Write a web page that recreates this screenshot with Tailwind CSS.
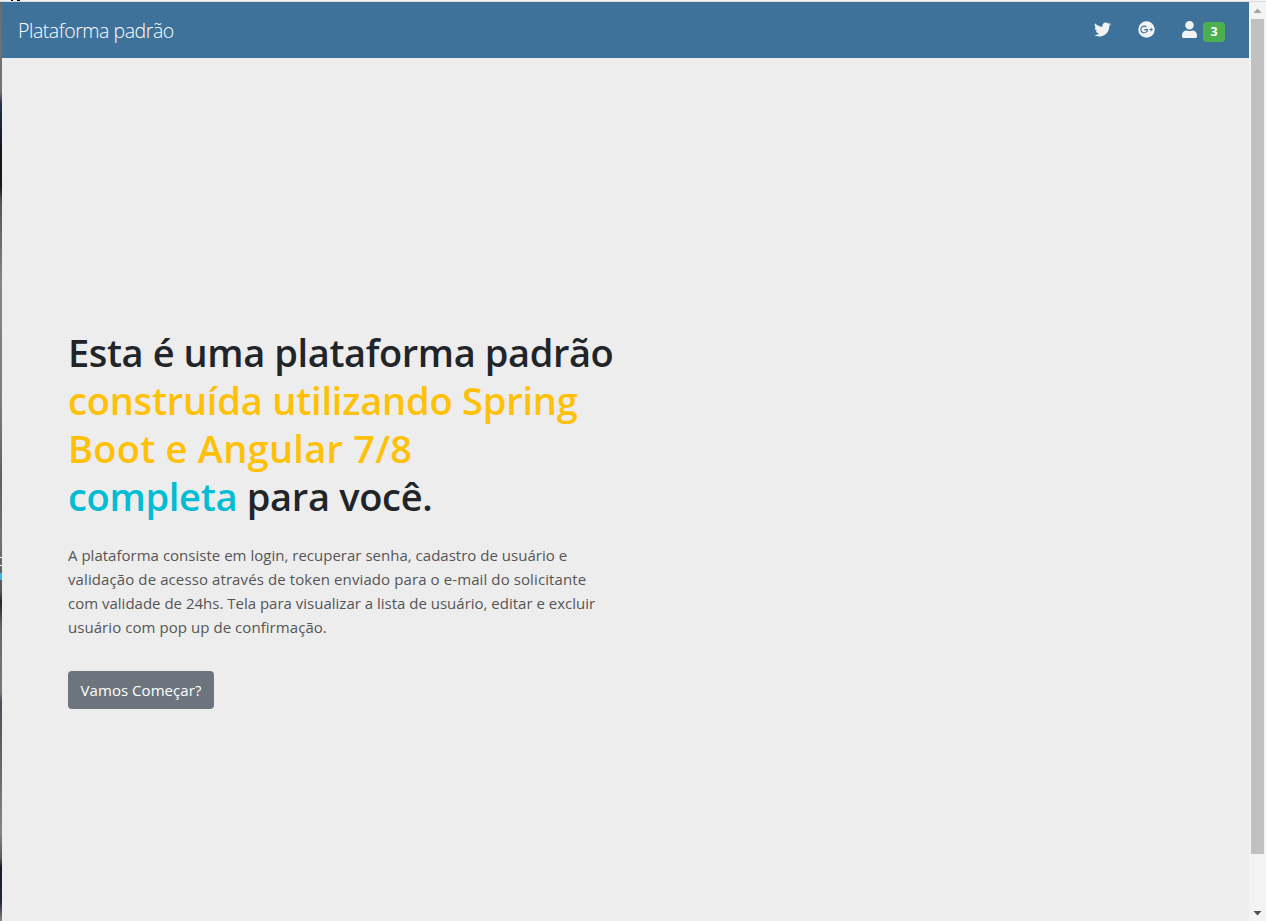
<!DOCTYPE html>
<html lang="pt-BR">
<head>
<meta charset="utf-8">
<title>Plataforma padrão</title>
<script src="https://cdn.jsdelivr.net/npm/@tailwindcss/browser@4"></script>
</head>
<body class="h-[921px] overflow-hidden bg-[#ededed] font-['Open_Sans','Noto_Sans',sans-serif]">
<div class="flex h-full flex-col">
  <div class="relative h-[2px] shrink-0 overflow-hidden border-b border-[#dcdcdc] bg-[#f3f3f3]">
    <div class="absolute top-0 left-[11px] h-px w-[2px] bg-black"></div>
    <div class="absolute top-0 left-[17px] h-[2px] w-[3px] bg-black"></div>
  </div>
  <div class="flex min-h-0 grow">
    <div class="relative w-[2px] shrink-0 bg-[linear-gradient(to_bottom,#6f6b66_0px,#77726d_90px,#24304d_102px,#10141c_150px,#17191d_185px,#555_200px,#858585_280px,#7b7b7b_400px,#606060_480px,#727272_540px,#555_590px,#23252b_600px,#666_625px,#777_690px,#4c4f5c_700px,#666_760px,#858585_830px,#5a5a5a_856px,#151b27_865px,#20283a_900px,#858585_919px)]">
      <div class="absolute top-[555px] h-px w-[2px] bg-white"></div>
      <div class="absolute top-[563px] h-px w-[2px] bg-white"></div>
      <div class="absolute top-[571px] h-[7px] w-[2px] bg-[#3bb8ee]"></div>
    </div>
    <div class="flex w-[1247px] shrink-0 flex-col">
      <nav class="flex h-14 shrink-0 items-center justify-between bg-[#3f729b] pr-6 pl-4 text-[#f3f3f3]">
        <a class="pt-px text-[19.5px] font-light tracking-[-0.45px] whitespace-nowrap text-white">Plataforma padrão</a>
        <div class="flex items-center">
          <svg class="mr-[27px] mb-px size-[17px]" viewBox="0 0 512 512" fill="currentColor"><path d="M459.37 151.716c.325 4.548.325 9.097.325 13.645 0 138.72-105.583 298.558-298.558 298.558-59.452 0-114.68-17.219-161.137-47.106 8.447.974 16.568 1.299 25.34 1.299 49.055 0 94.213-16.568 130.274-44.832-46.132-.975-84.792-31.188-98.112-72.772 6.498.974 12.995 1.624 19.818 1.624 9.421 0 18.843-1.3 27.614-3.573-48.081-9.747-84.143-51.98-84.143-102.985v-1.299c13.969 7.797 30.214 12.67 47.431 13.319-28.264-18.843-46.781-51.005-46.781-87.391 0-19.492 5.197-37.36 14.294-52.954 51.655 63.675 129.3 105.258 216.365 109.807-1.624-7.797-2.599-15.918-2.599-24.04 0-57.828 46.782-104.934 104.934-104.934 30.213 0 57.502 12.67 76.67 33.137 23.715-4.548 46.456-13.32 66.599-25.34-7.798 24.366-24.366 44.833-46.132 57.827 21.117-2.273 41.584-8.122 60.426-16.243-14.292 20.791-32.161 39.308-52.628 54.253z"/></svg>
          <svg class="mr-[27px] mb-px h-[17px] w-[17px]" viewBox="0 0 496 512" fill="none" stroke="#3f729b"><circle cx="248" cy="256" r="248" fill="#f3f3f3" stroke="none"/><path stroke-width="34" d="M246 180A101 101 0 1 0 278 259H181"/><path stroke-width="28" d="M336 256h104M389 204v104"/></svg>
          <svg class="mr-1.5 mb-px h-[17px] w-[15px]" viewBox="0 0 448 512" fill="currentColor"><path d="M224 256c70.7 0 128-57.3 128-128S294.7 0 224 0 96 57.3 96 128s57.3 128 128 128zm89.6 32h-16.7c-22.2 10.2-46.9 16-72.9 16s-50.6-5.8-72.9-16h-16.7C60.2 288 0 348.2 0 422.4V464c0 26.5 21.5 48 48 48h352c26.5 0 48-21.5 48-48v-41.6c0-74.2-60.2-134.4-134.4-134.4z"/></svg>
          <span class="mt-1 flex h-5 w-[22px] items-center justify-center rounded bg-[#4caf50] pt-px text-[12.5px] font-bold text-white">3</span>
        </div>
      </nav>
      <main class="flex grow flex-col items-start pt-[270px] pl-[66px] whitespace-nowrap">
        <h1 class="text-[38px] leading-[48px] font-semibold text-[#212529]">
          <span class="block w-fit tracking-[-0.4px]">Esta é uma plataforma padrão</span>
          <span class="block w-fit tracking-[-0.2px] text-[#ffc107]">construída utilizando Spring</span>
          <span class="block w-fit tracking-[0.25px] text-[#ffc107]">Boot e Angular 7/8</span>
          <span class="block w-fit tracking-[-0.3px]"><span class="text-[#00bcd4]">completa</span> para você.</span>
        </h1>
        <p class="mt-[23px] text-[15px] leading-6 text-[#555]">
          <span class="block w-fit tracking-[0.015px]">A plataforma consiste em login, recuperar senha, cadastro de usuário e</span>
          <span class="block w-fit tracking-[0.1px]">validação de acesso através de token enviado para o e-mail do solicitante</span>
          <span class="block w-fit">com validade de 24hs. Tela para visualizar a lista de usuário, editar e excluir</span>
          <span class="block w-fit tracking-[0.06px]">usuário com pop up de confirmação.</span>
        </p>
        <button class="mt-8 flex h-[38px] w-[146px] items-center justify-center rounded bg-[#6c757d] text-[15px] tracking-[0.05px] text-white">Vamos Começar?</button>
      </main>
    </div>
    <div class="flex w-[17px] shrink-0 flex-col items-center bg-[#f3f3f3]">
      <svg class="h-[17px] w-[17px] shrink-0" viewBox="0 0 17 17" fill="#a3a3a3"><path d="M4.5 11 8.5 6.5 12.5 11z"/></svg>
      <div class="h-[835px] w-[13px] bg-[#c1c1c1]"></div>
      <svg class="mt-auto h-[17px] w-[17px] shrink-0" viewBox="0 0 17 17" fill="#505050"><path d="M4.5 7 8.5 11.5 12.5 7z"/></svg>
    </div>
  </div>
</div>
</body>
</html>
